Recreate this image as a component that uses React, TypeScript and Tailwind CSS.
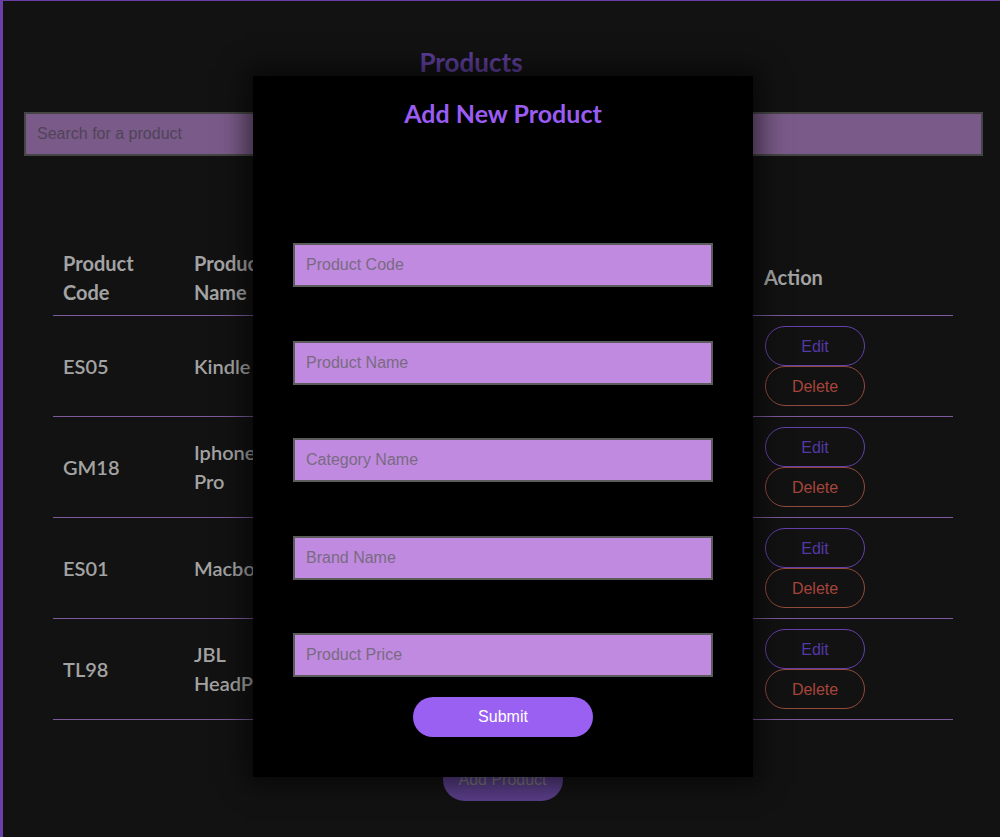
import React from "react";

const products = [
  { code: "ES05", name: "Kindle", category: "Electronics", brand: "Amazon", price: "$120" },
  { code: "GM18", name: "Iphone 13 Pro", category: "Mobiles", brand: "Apple", price: "$999" },
  { code: "ES01", name: "Macbook", category: "Laptops", brand: "Apple", price: "$1299" },
  { code: "TL98", name: "JBL HeadPhones", category: "Audio", brand: "JBL", price: "$80" },
];

const fields = ["Product Code", "Product Name", "Category Name", "Brand Name", "Product Price"];

function AddProductModal() {
  return (
    <div className="absolute inset-0 flex items-start justify-center pt-[75px] pl-[3px]">
      <div className="w-[500px] h-[701px] bg-black shadow-[0_0_24px_8px_rgba(0,0,0,0.55)] flex flex-col items-center">
        <h2 className="mt-[24px] text-[25px] font-bold text-[#9a5cf2] leading-[26px]">
          Add New Product
        </h2>
        <div className="mt-[117px] flex flex-col gap-[53.5px] w-[420px]">
          {fields.map((f) => (
            <input
              key={f}
              placeholder={f}
              className="h-[44px] w-full border-2 border-[#5c5c5c] bg-[#bf8ae0] px-[11px] text-[16px] font-['Liberation_Sans',Arial,sans-serif] text-[#333] placeholder:text-[#7a6a80] outline-none"
            />
          ))}
        </div>
        <button className="mt-[20px] w-[180px] h-[40px] rounded-full bg-[#9a60f2] text-white text-[16px] font-['Liberation_Sans',Arial,sans-serif]">
          Submit
        </button>
      </div>
    </div>
  );
}

export default function App() {
  return (
    <div className="relative min-h-screen h-[837px] overflow-hidden bg-[#121212] border-t border-l-[3px] border-[#6a3fa8] font-['Lato','Noto_Sans',sans-serif]">
      <h1 className="pt-[46px] pr-[61px] text-center text-[26px] leading-[30px] font-bold text-[#5b3d96]">
        Products
      </h1>
      <div className="mt-[35px] ml-[21px] w-[959px]">
        <input
          placeholder="Search for a product"
          className="h-[44px] w-full border-2 border-[#454545] bg-[#7a5a88] px-[11px] text-[16px] font-['Liberation_Sans',Arial,sans-serif] placeholder:text-[#4f4458] outline-none"
        />
      </div>
      <table className="mt-[93px] ml-[50px] w-[900px] border-collapse text-left text-[20px] text-[#a3a3a3]">
        <thead>
          <tr className="border-b border-[#7d5a9c]">
            <th className="w-[131px] pl-[10px] pb-[8px] font-bold leading-[29px]">Product<br />Code</th>
            <th className="w-[150px] pl-[10px] pb-[8px] font-bold leading-[29px]">Product<br />Name</th>
            <th className="w-[140px] pl-[10px] pb-[8px] font-bold leading-[29px]">Category<br />Name</th>
            <th className="w-[130px] pl-[10px] pb-[8px] font-bold leading-[29px]">Brand<br />Name</th>
            <th className="w-[150px] pl-[10px] pb-[8px] font-bold leading-[29px]">Product<br />Price</th>
            <th className="pl-[10px] pb-[10px] font-bold leading-[29px]">Action</th>
          </tr>
        </thead>
        <tbody>
          {products.map((p) => (
            <tr key={p.code} className="h-[101px] border-b border-[#7d5a9c] font-semibold leading-[29px]">
              <td className="pl-[10px]">{p.code}</td>
              <td className="pl-[10px] pr-[20px]">{p.name}</td>
              <td className="pl-[10px]">{p.category}</td>
              <td className="pl-[10px]">{p.brand}</td>
              <td className="pl-[10px]">{p.price}</td>
              <td className="pl-[11px]">
                <div className="flex flex-col font-['Liberation_Sans',Arial,sans-serif] text-[16px] font-normal">
                  <button className="w-[100px] h-[40px] rounded-full border border-[#6440ac] text-[#5338a6]">Edit</button>
                  <button className="w-[100px] h-[40px] rounded-full border border-[#934a3c] text-[#a6453a]">Delete</button>
                </div>
              </td>
            </tr>
          ))}
        </tbody>
      </table>
      <div className="mt-[38px] pl-[2px] flex justify-center">
        <button className="w-[120px] h-[43px] rounded-full bg-[#5a3e88] text-[#777] text-[16px] font-['Liberation_Sans',Arial,sans-serif]">
          Add Product
        </button>
      </div>
      <AddProductModal />
    </div>
  );
}
